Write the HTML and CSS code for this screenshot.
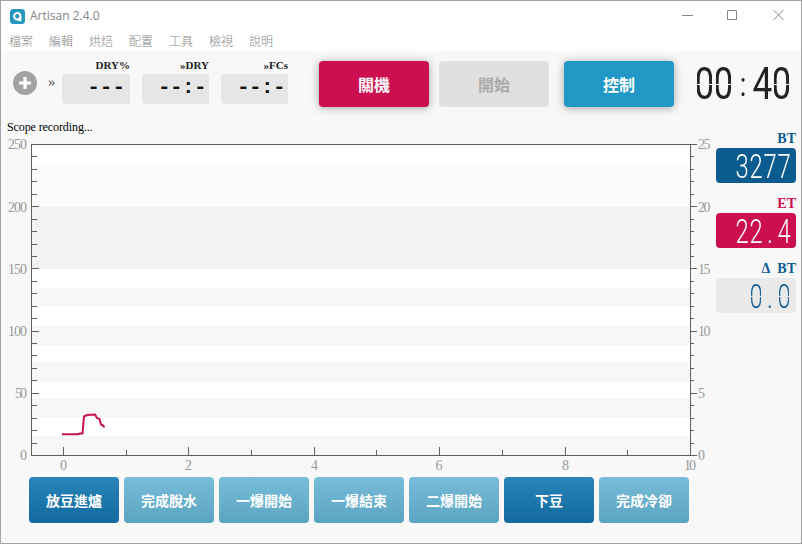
FILE: index.html
```
<!DOCTYPE html>
<html lang="zh-Hant">
<head>
<meta charset="utf-8">
<title>Artisan 2.4.0</title>
<link rel="stylesheet" href="styles.css">
</head>
<body>
<div class="window">
  <header class="titlebar">
    <svg class="logo" width="15" height="15" viewBox="0 0 15 15"><rect width="15" height="15" rx="3.5" fill="#2596be"/><circle cx="7.3" cy="7.3" r="3.2" fill="none" stroke="#fff" stroke-width="2"/><path d="M10.500 7v4.300H8.500" fill="none" stroke="#fff" stroke-width="1.800"/></svg>
    <h1>Artisan 2.4.0</h1>
    <svg class="controls" width="104" height="12" viewBox="0 0 104 12" fill="none" stroke="#888"><path d="M0 5.500h11M45.500 .500h9v9h-9zM91.500 0l10 10M101.500 0l-10 10"/></svg>
  </header>
  <nav class="menu"><span>檔案</span><span>編輯</span><span>烘焙</span><span>配置</span><span>工具</span><span>檢視</span><span>說明</span></nav>
  <section class="toolbar">
    <svg class="plus" width="24" height="24" viewBox="0 0 24 24"><circle cx="12" cy="12" r="12" fill="#a3a3a3"/><path d="M12 6v12M6 12h12" stroke="#fff" stroke-width="3.200"/></svg>
    <span class="more">»</span>
    <div class="phases">
      <div class="phase"><b>DRY%</b><div class="slot"><span>---</span></div></div>
      <div class="phase cut"><b>»DRY</b><div class="slot"><span>--:--</span></div></div>
      <div class="phase cut"><b>»FCs</b><div class="slot"><span>--:--</span></div></div>
    </div>
    <div class="actions">
      <button class="off">關機</button><button class="start" disabled>開始</button><button class="control">控制</button>
    </div>
    <div class="timer seg"><span class="zero">0</span><span class="zero">0</span><i>:</i><span>4</span><span class="zero">0</span></div>
  </section>
  <p class="status">Scope recording...</p>
  <main class="content">
    <svg class="chart" width="714" height="336" viewBox="0 137 714 336">
      <g shape-rendering="crispEdges">
        <path fill="#fff" d="M32 145h658v310H32z"/>
        <path fill="#fbfbfb" d="M32 165h658v42H32z"/>
        <path fill="#f2f2f2" d="M32 207h658v62H32z"/>
        <path fill="#f7f7f7" d="M32 288h658v19H32zM32 325h658v20H32zM32 362h658v20H32zM32 399h658v18H32zM32 436h658v19H32z"/>
        <path fill="none" stroke="#606060" d="M31.500 144.500H697M31.500 455.500H697M31.500 144v312M690.500 144v312"/>
        <g fill="none" stroke="#606060">
          <path stroke-width="6" stroke-dasharray="1 11.440" d="M34 144v312"/>
          <path stroke-width="3" stroke-dasharray="1 11.440" d="M692 144v312"/>
          <path stroke-width="8" stroke-dasharray="1 61.200" d="M35 144v312"/>
          <path stroke-width="7" stroke-dasharray="1 61.200" d="M693.500 144v312"/>
          <path d="M63.500 447v8M188.500 447v8M314.500 447v8M439.500 447v8M565.500 447v8M690.500 447v8M126.500 450v5M251.500 450v5M376.500 450v5M502.500 450v5M627.500 450v5"/>
        </g>
      </g>
      <path class="curve" d="M62 434.300H78L80 433.500H82.500L84 416.500L87 415L95 414.500L97 418L99.500 419L101 424.500L103 425.500L104.500 427.500"/>
      <g class="ylabel">
        <text x="27" y="149" textLength="19">250</text><text x="27" y="212" textLength="19">200</text><text x="27" y="274" textLength="19">150</text><text x="27" y="336" textLength="19">100</text><text x="27" y="398" textLength="12">50</text><text x="27" y="460">0</text>
      </g>
      <g class="y2label">
        <text x="698" y="149" textLength="12.500">25</text><text x="698" y="212" textLength="12.500">20</text><text x="698" y="274" textLength="12.500">15</text><text x="698" y="336" textLength="12.500">10</text><text x="698" y="398">5</text><text x="698" y="460">0</text>
      </g>
      <g class="xlabel">
        <text x="63.500" y="470">0</text><text x="188.500" y="470">2</text><text x="314.500" y="470">4</text><text x="439" y="470">6</text><text x="565.500" y="470">8</text><text x="690" y="470" textLength="12">10</text>
      </g>
    </svg>
    <aside class="readings">
      <h2 class="blue">BT</h2><div class="lcd bt seg"><span>3</span><span>2</span><span>7</span><span>7</span></div>
      <h2 class="red">ET</h2><div class="lcd et seg"><span>2</span><span>2</span><i>.</i><span>4</span></div>
      <h2 class="blue">Δ&nbsp; BT</h2><div class="lcd delta seg"><span class="zero">0</span><i>.</i><span class="zero">0</span></div>
    </aside>
  </main>
  <footer class="events">
    <button class="active">放豆進爐</button><button>完成脫水</button><button>一爆開始</button><button>一爆結束</button><button>二爆開始</button><button class="active">下豆</button><button>完成冷卻</button>
  </footer>
</div>
</body>
</html>
```
FILE: styles.css
```
* { box-sizing: border-box; }
body { margin: 0; font-family: "Liberation Serif", "Noto Sans CJK TC", serif; }
h1, h2, p { margin: 0; }
button { border: 0; padding: 0; border-radius: 4px; color: #fff; font-family: "Noto Sans CJK TC", sans-serif; font-weight: 700; }
.window { width: 802px; height: 544px; border: 1px solid #a3a3a3; background: #f8f8f8; display: flex; flex-direction: column; overflow: hidden; }
.titlebar { height: 30px; flex: none; background: #fff; display: flex; align-items: center; padding: 0 15px 0 9px; }
.titlebar h1 { flex: 1; margin-left: 5px; font: 12px/28px "Open Sans", sans-serif; color: #858585; }
.menu { height: 20px; flex: none; background: #fff; padding-left: 8px; display: flex; font: 12px/20px "Noto Sans CJK TC", sans-serif; font-weight: 300; color: #888; }
.menu span { width: 40px; }
.toolbar { height: 66px; flex: none; display: flex; }
.plus { margin: 20px 0 0 12px; flex: none; }
.more { width: 25px; flex: none; padding: 19px 0 0 11px; font-size: 15px; line-height: 24px; color: #555; }
.phases { display: flex; gap: 12px; width: 240px; flex: none; }
.phase { width: 68px; }
.phase b { display: block; height: 23px; padding-top: 8px; text-align: right; font-size: 11px; line-height: 13px; color: #222; }
.cut { width: 67px; }
.slot { height: 30px; background: #e6e6e6; border-radius: 4px 0 0 4px; overflow: hidden; display: flex; justify-content: flex-end; padding-right: 5px; font: bold 21px/27px "Liberation Mono", monospace; color: #111; }
.cut .slot { justify-content: flex-start; padding: 0 0 0 16px; letter-spacing: -.6px; }
.actions { display: flex; gap: 10px; padding-top: 10px; margin-left: 17px; flex: none; }
.actions button { width: 110px; height: 46px; font-size: 16px; }
.off { background: #cc0f50; box-shadow: 0 1px 8px #777a; }
.actions .start { background: #e0e0e0; color: #aaa; }
.actions .control { background: #2298c7; box-shadow: 0 1px 8px #777a; margin-left: 5px; }
.seg { display: flex; align-items: center; font-family: Roboto, sans-serif; }
.seg span, .seg i { font-style: normal; display: flex; flex: none; justify-content: center; line-height: 1; transform: scaleX(.8); }
.zero { mask: linear-gradient(#000 0 49%, transparent 49% 53%, #000 53%); }
.timer { margin: 15px 0 0 21px; height: 36px; width: 96px; font-size: 44px; color: #222; font-weight: 400; }
.timer span { width: 19px; }
.timer i { width: 20px; font-size: 34px; }
.status { height: 20px; flex: none; padding: 3px 0 0 6px; font-size: 12px; line-height: 15px; letter-spacing: -.1px; color: #000; }
.content { height: 336px; flex: none; display: flex; }
.chart { margin-left: -1px; flex: none; font: 14px "Liberation Serif", serif; fill: #999; }
.curve { fill: none; stroke: #c8134f; stroke-width: 2; }
.ylabel { text-anchor: end; }
.xlabel { text-anchor: middle; }
.readings { width: 82px; padding-left: 2px; margin-top: -8px; }
.readings h2 { height: 19px; text-align: right; font-size: 14px; line-height: 19px; width: 80px; }
.blue { color: #0c5b90; }
.red { color: #cc0f50; }
.lcd { width: 80px; height: 35px; margin-bottom: 11px; border-radius: 4px; justify-content: flex-end; padding-right: 5px; font-size: 34px; font-weight: 300; color: #fff; }
.lcd span, .lcd i { width: 14px; }
.readings .seg span { transform: scaleX(.7); }
.bt { background: #0c5b90; }
.et { background: #cc0f50; }
.delta { background: #e9e9e9; color: #0c5b90; }
.events { display: flex; gap: 5px; padding: 4px 0 0 28px; }
.events button { width: 90px; height: 46px; font-size: 14px; background: linear-gradient(#78bdd9, #5ba4c1); }
.events .active { background: linear-gradient(#2a85b8, #126a9e); }
```
